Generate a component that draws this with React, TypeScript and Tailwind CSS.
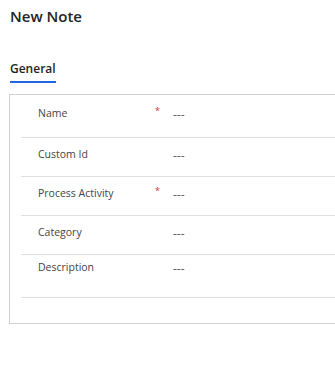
import React from 'react';

type Field = {
  label: string;
  required?: boolean;
  rowClass: string;
};

const fields: Field[] = [
  { label: 'Name', required: true, rowClass: 'h-[43px] pt-[10px]' },
  { label: 'Custom Id', rowClass: 'h-[39px] pt-[8px]' },
  { label: 'Process Activity', required: true, rowClass: 'h-[39px] pt-[8px]' },
  { label: 'Category', rowClass: 'h-[39px] pt-[8px]' },
  { label: 'Description', rowClass: 'h-[43px] pt-[4px]' },
];

export default function App() {
  return (
    <div className="w-[335px] h-[379px] overflow-hidden bg-white font-['Open_Sans',sans-serif]">
      <h1 className="pl-[10px] pt-[6px] text-[15px] leading-[20px] font-semibold text-[#242424]">New Note</h1>

      <div className="mt-[29px] pl-[10px]">
        <div className="inline-block border-b-2 border-[#2266e3] pb-[4px] text-[12px] leading-[16px] font-semibold text-[#242424]">
          General
        </div>
      </div>

      <div className="mt-[11px] ml-[9px] w-[400px] h-[230px] border border-[#d1d1d1] pl-[11px]">
        {fields.map((f) => (
          <div key={f.label} className={`flex border-b border-[#e0e0e0] pl-[17px] ${f.rowClass}`}>
            <div className="w-[117px] text-[10.5px] leading-[16px] text-[#444444]">{f.label}</div>
            <div className="w-[18px] text-[9px] leading-[12px] text-[#d13438]">{f.required ? '*' : ''}</div>
            <div className="pt-[2px] text-[12px] leading-[16px] text-[#616161]">---</div>
          </div>
        ))}
      </div>
    </div>
  );
}
